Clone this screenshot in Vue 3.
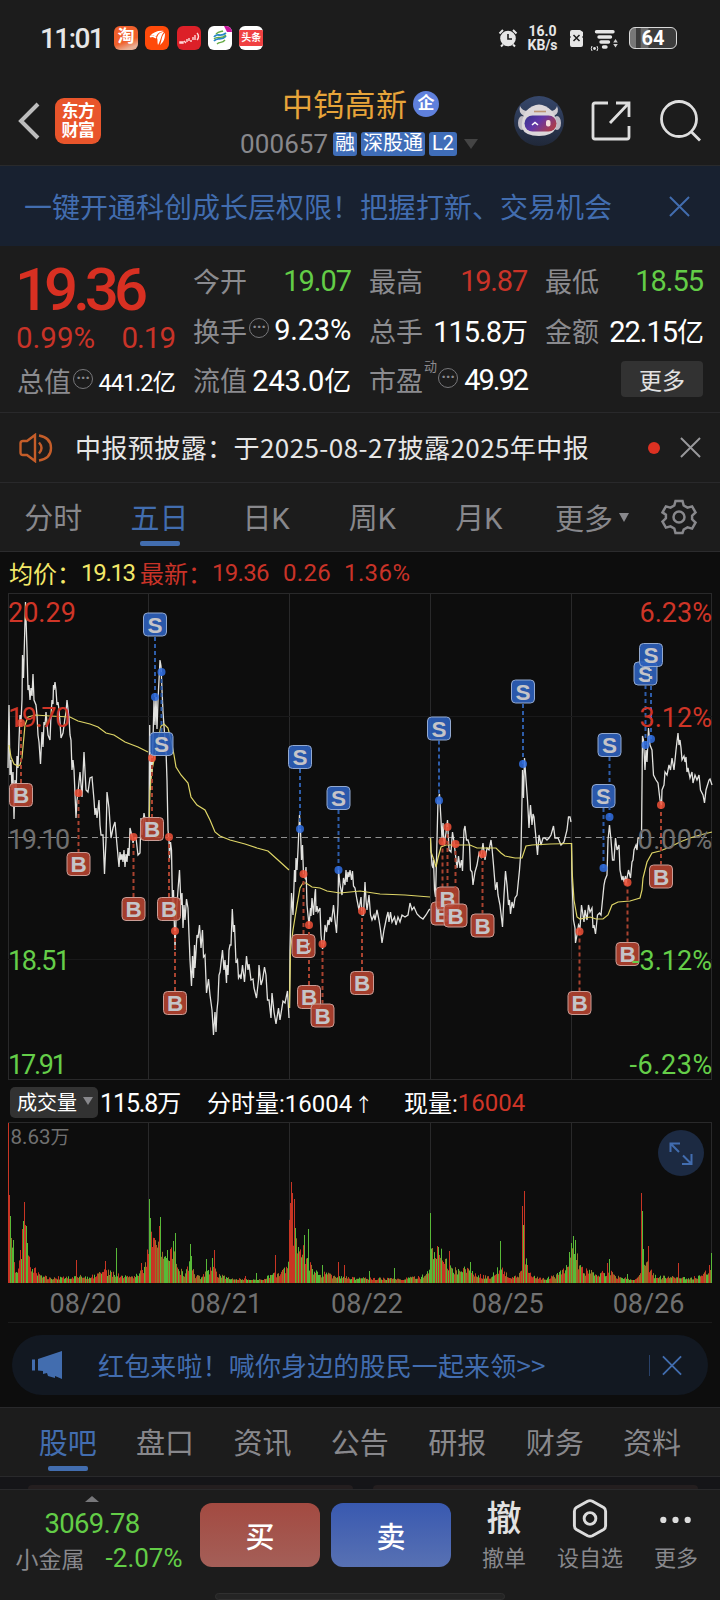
<template>
  <div class="phone">
    <div class="status">
      <span class="time">11:01</span>
      <div class="apps">
        <span class="app app-tao">淘</span>
        <svg class="app" viewBox="0 0 24 24">
          <rect width="24" height="24" fill="#ff4a0a" />
          <path d="M5 10C8 6 14 4 19 5C14 6 12 8 11 11C9 9 7 9 5 10ZM12 12C13 8 15 6 19 6C16 9 16 14 13 19C12 16 13 14 12 12ZM16 16C17 12 17 9 20 7C20 12 19 16 15 19Z" fill="#fff" />
          <path d="M5 11C7 9.500 9 10 11 12" stroke="#fff" stroke-width="1.500" fill="none" />
        </svg>
        <svg class="app" viewBox="0 0 24 24">
          <rect width="24" height="24" fill="#dc2028" />
          <path d="M3 16h3v1H3ZM7 15l2 2M10 13v3M12 12v3M14 14v2M16 11v3M18 9v5M20 7c2 2 2 5 0 7" stroke="#ffd9d9" stroke-width="1.400" fill="none" />
        </svg>
        <svg class="app" viewBox="0 0 24 24">
          <rect width="24" height="24" fill="#fff" />
          <path d="M16 0h8v6h-5z" fill="#c8149a" />
          <path d="M6 11c3-5 6 1 12-4M6 15c4-5 6 1 12-5" stroke="#2a87c8" stroke-width="1.800" fill="none" />
          <path d="M8 8c3-3 5-2 7-3M6 13c4-4 7 1 12-4M9 18c3-3 5 0 8-4" stroke="#66ab46" stroke-width="1.400" fill="none" />
        </svg>
        <span class="app app-tt"><i>头条</i></span>
      </div>
      <svg class="alarm" viewBox="0 0 20 20">
        <circle cx="10" cy="10.500" r="7.800" fill="#e6e6e6" />
        <path d="M1.500 5.500L5 2M18.500 5.500L15 2M5 16.500l-2 2M15 16.500l2 2" stroke="#e6e6e6" stroke-width="2" />
        <path d="M10 6v5h4" stroke="#1c1c1c" stroke-width="1.600" fill="none" />
      </svg>
      <div class="speed"><span>16.0</span><span>KB/s</span></div>
      <svg class="sim" viewBox="0 0 13 17">
        <path d="M2 0h8l3 2v4l-1 1 1 1v7q0 2-2 2H2q-2 0-2-2V8l1-1-1-1V2q0-2 2-2z" fill="#e6e6e6" />
        <path d="M3.500 5l6 6M9.500 5l-6 6" stroke="#1c1c1c" stroke-width="1.500" />
      </svg>
      <svg class="wifi" viewBox="0 0 28 24">
        <g stroke="#e6e6e6" stroke-width="3.400" stroke-linecap="round">
          <path d="M6.500 3.800H23M9 9h11.500M11 14h7.500M13.500 19h2.500" />
        </g>
        <path d="M2 18q-1.500 2.500 0 5M7 18q1.500 2.500 0 5" stroke="#e6e6e6" stroke-width="1" fill="none" />
        <circle cx="4.500" cy="20.500" r="1.400" fill="#e6e6e6" />
        <path d="M25.500 11l2.300 3.500h-4.600zM25.500 19.500l2.300-3.500h-4.600z" fill="#d0d0d0" />
      </svg>
      <div class="battery">64</div>
    </div>

    <header class="header">
      <svg class="back" viewBox="0 0 22 38"><path d="M20 2L3 19L20 36" /></svg>
      <div class="logo"><span>东方</span><span>财富</span></div>
      <div class="stock">
        <div class="stock-name">中钨高新<span class="corp">企</span></div>
        <div class="stock-code">
          <span class="code">000657</span>
          <span v-for="tag in tags" :key="tag" class="tag">{{ tag }}</span>
          <i class="caret"></i>
        </div>
      </div>
      <svg class="robot" viewBox="0 0 50 50">
        <defs>
          <linearGradient id="visor" x1="0" y1="0" x2="1" y2="0.500">
            <stop offset="0" stop-color="#34348c" />
            <stop offset="0.500" stop-color="#6336a8" />
            <stop offset="1" stop-color="#a83d50" />
          </linearGradient>
          <linearGradient id="night" x1="0" y1="0" x2="0" y2="1">
            <stop offset="0" stop-color="#36476b" />
            <stop offset="1" stop-color="#202839" />
          </linearGradient>
        </defs>
        <circle cx="25" cy="25" r="25" fill="url(#night)" />
        <path d="M6 10q-2 7 4 10l4-5q-6 0-8-5zM43 10q3 7-3 10l-4-5q6 0 7-5z" fill="#cfcbd0" />
        <ellipse cx="8" cy="27" rx="4" ry="7" fill="#bdb9c2" />
        <ellipse cx="43" cy="27" rx="4" ry="7" fill="#bdb9c2" />
        <path d="M12 15Q25 2 38 15Q44 24 42 32Q38 40 25 40Q11 40 8 32Q7 23 12 15Z" fill="#dcd7da" />
        <rect x="10.500" y="19.500" width="32" height="16" rx="8" fill="url(#visor)" />
        <path d="M18 29l3-2.500 3 2.500" stroke="#fff" stroke-width="1.600" fill="none" />
        <rect x="32" y="24" width="4.500" height="6.500" rx="2" fill="#f4dcdc" />
        <path d="M20 15.500h12" stroke="#bd9474" stroke-width="1.600" />
      </svg>
      <svg class="share" viewBox="0 0 40 40">
        <path d="M17 2H4Q2 2 2 4V36Q2 38 4 38H36Q38 38 38 36V25M25 2H38V16M37 3L19 22" />
      </svg>
      <svg class="search" viewBox="0 0 42 42"><circle cx="19" cy="19" r="17.500" /><path d="M31 31.500L40 40.500" /></svg>
    </header>

    <div class="notice">
      <span>一键开通科创成长层权限！把握打新、交易机会</span>
      <svg class="close" viewBox="0 0 22 22"><path d="M1 1l20 20M21 1L1 21" /></svg>
    </div>

    <section class="quote">
      <div class="main-quote">
        <div class="price">19.36</div>
        <div class="change"><span>0.99%</span><span>0.19</span></div>
        <div class="cell small">
          <span class="label">总值</span><i class="dots">···</i><b>441.2亿</b>
        </div>
      </div>
      <div class="cells">
        <div v-for="cell in cells" :key="cell.label" class="cell" :class="cell.tone">
          <span class="label">{{ cell.label }}</span><sup v-if="cell.sup">{{ cell.sup }}</sup><i v-if="cell.info" class="dots">···</i>
          <b>{{ cell.value }}<small v-if="cell.unit">{{ cell.unit }}</small></b>
        </div>
        <div class="cell end"><button class="more">更多</button></div>
      </div>
    </section>

    <div class="report">
      <svg class="speaker" viewBox="0 0 34 30">
        <path d="M8 8L16 2V28L8 22H4Q1.500 22 1.500 19.500V10.500Q1.500 8 4 8ZM20 9.500q5 5.500 0 11M20 2.500q12 2 12 12.500t-12 12.500" />
      </svg>
      <span class="report-text">中报预披露：于2025-08-27披露2025年中报</span>
      <i class="unread"></i>
      <svg class="close" viewBox="0 0 22 22"><path d="M1 1l20 20M21 1L1 21" /></svg>
    </div>

    <nav class="periods">
      <span v-for="p in periods" :key="p" class="tab" :class="{ active: p === '五日' }">{{ p }}</span>
      <span class="tab-more">更多<i></i></span>
      <svg class="gear" viewBox="0 0 36 36">
        <path d="M14.500 2h7l1.200 4.500 3.800 2.200 4.600-1.300 3.400 6-3.400 3.300v3.600l3.400 3.300-3.400 6-4.600-1.300-3.800 2.200L21.500 34h-7l-1.200-4.500-3.800-2.200-4.600 1.300-3.400-6 3.400-3.300v-3.600L1.500 13.400l3.400-6 4.600 1.300 3.800-2.200z" />
        <circle cx="18" cy="18" r="5.500" />
      </svg>
    </nav>

    <section class="chart-area">
      <div class="average">
        <span class="yellow">均价：</span><span class="yellow avg-price">19.13</span>
        <span>最新：</span><span class="last-price">19.36</span>
        <span class="last-diff">0.26</span><span>1.36%</span>
      </div>

      <svg class="price-chart" viewBox="0 593 720 487">
        <path class="frame" d="M8 593.500H712M8 1079.500H712M8.500 593V1080M711.500 593V1080" />
        <path class="frame" d="M148.500 593V1080M289.500 593V1080M430.500 593V1080M571.500 593V1080" />
        <path class="faint" d="M8 716.500H712M8 959.500H712" />
        <path class="zero" d="M8 837.500H712" />
        <polyline v-for="(d, i) in priceLines" :key="'p' + i" class="price-line" :points="d" />
        <polyline v-for="(d, i) in averageLines" :key="'a' + i" class="average-line" :points="d" />
        <g v-for="(m, i) in markers" :key="'m' + i" :class="m[0] === 'S' ? 'sell' : 'buy'">
          <line :x1="m[1]" :x2="m[1]" :y1="m[2]" :y2="m[3] + (m[3] > m[2] ? -12 : 12)" />
          <circle :cx="m[1]" :cy="m[2]" r="4" />
          <rect :x="m[1] - 11.500" :y="m[3] - 11.500" width="23" height="23" rx="4" />
          <text :x="m[1]" :y="m[3] + 8">{{ m[0] }}</text>
        </g>
        <g class="axis">
          <text class="up" x="8" y="622">20.29</text>
          <text class="up tight" x="8" y="726.500">19.70</text>
          <text class="flat tight" x="8" y="848.500">19.10</text>
          <text class="down tight" x="8" y="969.500">18.51</text>
          <text class="down tighter" x="8" y="1074">17.91</text>
        </g>
        <g class="axis right">
          <text class="up" x="712" y="622">6.23%</text>
          <text class="up" x="712" y="726.500">3.12%</text>
          <text class="flat wide" x="713" y="848.500">0.00%</text>
          <text class="down" x="712" y="969.500">-3.12%</text>
          <text class="down wide" x="713" y="1074">-6.23%</text>
        </g>
      </svg>

      <div class="volume-head">
        <span class="indicator">成交量<i></i></span>
        <span class="total">115.8<small>万</small></span>
        <span class="minute">分时量:16004<em>↑</em></span>
        <span class="current">现量:</span><span class="red">16004</span>
      </div>

      <div class="volume-box">
        <svg class="volume-chart" viewBox="0 1122 720 161">
          <path class="frame" d="M8 1122.500H712M711.500 1122V1283M148.500 1122V1283M289.500 1122V1283M430.500 1122V1283M571.500 1122V1283" />
          <path v-for="(d, color) in volumePaths" :key="color" :d="d" :stroke="color" fill="none" />
          <text class="volume-max" x="10.500" y="1144">8.63<tspan font-size="19">万</tspan></text>
        </svg>
        <svg class="expand" viewBox="0 0 46 46">
          <circle cx="23" cy="23" r="23" />
          <path d="M12.500 22V13.500H22M13 14l8 8M33.500 24V34H24M33 33.500L25 25.500" />
        </svg>
      </div>

      <div class="dates">
        <span v-for="d in dates" :key="d">{{ d }}</span>
      </div>

      <div class="promo">
        <svg class="horn" viewBox="0 0 31 28">
          <path d="M0 8.500h3v11H0zM6 8L30 0V28L23 25V27L16 25L15 22L11 23V20L6 19.500Z" />
        </svg>
        <span>红包来啦！喊你身边的股民一起来领&gt;&gt;</span>
        <svg class="close" viewBox="0 0 22 22"><path d="M1 1l20 20M21 1L1 21" /></svg>
      </div>
    </section>

    <nav class="sections">
      <span v-for="s in sections" :key="s" class="tab" :class="{ active: s === '股吧' }">{{ s }}</span>
    </nav>
    <div class="peek"><i></i><i></i></div>

    <footer class="footer">
      <div class="sector">
        <i class="up-caret"></i>
        <span class="sector-index">3069.78</span>
        <div class="sector-row"><span>小金属</span><b>-2.07%</b></div>
      </div>
      <button class="trade buy-button">买</button>
      <button class="trade sell-button">卖</button>
      <div class="action cancel"><strong>撤</strong><span>撤单</span></div>
      <div class="action watch">
        <svg viewBox="0 0 36 40"><path d="M15.500 2.300Q18 1 20.500 2.300L32 8.800Q34 10 34 12.500V27.500Q34 30 32 31.200L20.500 37.700Q18 39 15.500 37.700L4 31.200Q2 30 2 27.500V12.500Q2 10 4 8.800Z" /><circle cx="18" cy="20" r="6" /></svg>
        <span>设自选</span>
      </div>
      <div class="action other">
        <svg viewBox="0 0 36 40"><g class="solid"><circle cx="5" cy="21.500" r="3.200" /><circle cx="17.500" cy="21.500" r="3.200" /><circle cx="30" cy="21.500" r="3.200" /></g></svg>
        <span>更多</span>
      </div>
      <i class="home-bar"></i>
    </footer>
  </div>
</template>

<script setup>
const tags = ['融', '深股通', 'L2']
const periods = ['分时', '五日', '日K', '周K', '月K']
const dates = ['08/20', '08/21', '08/22', '08/25', '08/26']
const sections = ['股吧', '盘口', '资讯', '公告', '研报', '财务', '资料']

const cells = [
  { label: '今开', value: '19.07', tone: 'down' },
  { label: '最高', value: '19.87', tone: 'up' },
  { label: '最低', value: '18.55', tone: 'down' },
  { label: '换手', value: '9.23%', info: true, tone: 'percent' },
  { label: '总手', value: '115.8', unit: '万' },
  { label: '金额', value: '22.15', unit: '亿' },
  { label: '流值', value: '243.0', unit: '亿', tone: 'percent' },
  { label: '市盈', value: '49.92', sup: '动', info: true, tone: 'ratio' }
]

// one line per trading day
const priceLines = [
  '8,768 9,705 10,775 11,760 12,790 13,772 14,819 15,780 16,800 17,756 18,768 19,740 20,715 21,722 22,700 22.5,655 23.5,678 25.5,602 27,650 28,690 29,685 30,700 31,688 32,696 33,674 34,700 36,705 37,715 38,735 39,742 40.5,764 42,732 43,747 44,722 45,725 46,712 48,735 50,740 51,715 52,700 53,704 53.5,685 54,690 55,682 56,690 57,705 58,702 59,710 60,722 61,738 63,733 65,718 66,712 67,700 69,718 70,735 71,740 72,770 73,760 74,770 76,818 77,800 78,792 80,772 82,797 84,752 86,790 88,792 90,778 92,777 94,800 95,815 96,808 97,818 99,800 100,825 101,835 103,835 104.5,874 106,840 107,792 109,808 111,838 113,828 115,822 117,845 119,867 120,852 121,860 122,854 123,862 124,850 125,867 126,854 127,862 128,848 129,856 130,828 132,836 133,843 134,838 136,838 138,855 140,853 141,818 142,835 144,813 146,825 148,830',
  '149,833 149.7,725 150.3,790 151,755 152,775 153,740 154,700 155,725 156,697 157,729 158,700 159,680 160,660 161,666 162,690 163,712 165,740 166,750 167,780 168,830 169,840 169.5,860 170.5,842 171.5,850 172.5,905 173.500,890 175,950 176,920 178,890 179.5,870 181,905 182,893 183,928 184,905 185,920 186.5,899 188,908 189,935 190,960 191.5,986 192.5,956 193.5,978 194.5,945 195,968 197,935 198,938 199.5,925 201,948 202.5,930 203.5,957 205,955 206.5,993 208.5,979 210,995 212,1010 213.5,1035 215,1012 216,1032 217,1010 218,1000 219,975 220,972 222.5,950 224,970 225,960 226.5,983 227,965 228,975 229,950 230,945 231,945 232.3,909 233.5,932 234.5,925 236,963 237.5,960 238.5,978 240,975 241,979 242.5,965 244.5,982 246.5,956 248,970 249,964 251,980 253,979 254,988 256.5,998 258.5,980 259,965 261,985 262.5,980 264.5,967 266,975 267.5,1000 269,1000 271,1018 272,993 274,1012 276,1024 278.5,1008 280,1020 283,1001 285,1003 287.5,991 289,1018',
  '289.5,1008 290,950 291.5,893 293,915 294.5,870 295.5,882 296,858 297,870 298,850 299.5,815 300.5,830 301.5,860 302.5,845 303.5,875 305,878 306,867 307,905 309,925 310.5,908 311,916 312,898 313.5,915 315,893 315.5,889 316,912 317,906 318,912 320,908 321,935 322.5,949 324,943 325,925 326.5,932 328,920 329,925 330,917 331.5,922 333.5,905 335,920 336.5,933 338,905 338.5,870 340,885 342,895 343.5,878 345,885 346,870 347,882 348,872 349,877 350,870 351.5,880 352.5,871 353.5,886 355,888 357,900 359,910 361,897 362,915 363.5,915 365,882 366,900 367,910 369,895 370.5,915 372,920 374,915 375,920 377,910 379,920 380.5,930 382,943 384,930 386.5,918 388,912 389,922 390.5,912 392,922 394.5,917 396,925 398,917 400,922 402,915 405,917 408,915 410,903 412,910 414,907 417,914 420,917 423,919 426,915 429,910 430,909',
  '430.5,838 431,850 432,865 433,868 433.5,860 434.5,890 435.5,897 436.5,860 438,800 439.5,794 441,820 442,838 443,823 444,845 446,833 447.5,820 449,850 451,852 452.5,832 454,842 455.5,855 457,868 458.5,856 460,868 461.5,860 462.5,871 464,830 465,826 466.5,840 468,840 469.5,845 470.5,870 472,872 473,885 475,872 477,865 479,853 481,857 483,843 485,860 487,848 489,850 491,840 492,848 493.5,865 495.5,890 497,882 498,895 500,905 502.5,927 504,895 505.5,871 507,885 508.5,905 509.5,900 510.5,914 512,902 513.5,908 515,898 517,895 518,885 519.5,870 521,850 522,800 522.5,770 523.5,798 524.5,758 526,780 527.5,800 529,828 530,812 530.5,805 532,825 533,814 534,817 535.5,833 537.5,855 539,835 541,845 543,838 545,838 547,840 549,838 551,835 553.5,826 555,838 558,838 561,845 564,842 567,830 568.5,817 570,817 571,822',
  '571.5,843 572,880 573.5,920 575,928 575.5,943 577,935 578.5,925 580,928 581.5,905 583,915 584,922 585,910 587,920 588.5,905 590,912 592,908 593,928 594,925 595.5,934 597.5,915 599.5,913 601,915 603,895 604,885 605,880 607,875 608,840 609.5,825 611,840 612.5,860 614,860 615.5,838 617,850 619,845 620,870 622,880 623,876 624,882 625.5,876 626,885 627,878 628.5,870 630.5,878 632,862 633,860 634,850 636,845 637,850 638,838 640,838 641.5,838 642.5,736 643.5,740 645,770 646,750 647,762 648.5,728 650,745 652,750 653.5,775 656,780 658,783 660,800 661.500,806 662,790 664,785 665,772 667,775 669,765 670.5,770 672,758 674,770 676,750 678,733 679,745 680,740 681,748 682,760 684,756 685,762 686,757 687,772 688,768 690,778 692,772 693,783 695,775 697,780 699,775 700.5,790 703,795 704.5,803 706,790 709,780 710,779 712,785'
]

const averageLines = [
  '9,745 11,757 14,764 18,766 20,765 22,758 25,725 28,717 35,715 50,716 70,717 78,721 90,724 98,727 106,733 114,735 125,742 138,747 148,752',
  '149,830 150,790 152,770 155,755 158,740 161,726 164,724 168,728 171,740 174,755 176,767 181,775 188,783 191,797 197,805 205,810 210,820 215,832 220,836 230,840 245,844 257,848 268,851 278,860 289,870',
  '289.5,1008 290.5,950 293,930 297,905 300,888 303,883 306,883 312,887 320,888 327,891 340,893 360,891 380,894 405,895 430,897',
  '430.5,838 431,852 434,860 436,867 438,858 441,847 446,845 455,845 470,845 477,848 496,848 501,853 505,856 515,858 522,858 526,846 532,845 550,844 571,843.5',
  '571.5,843 572,870 574,900 577,917 580,919 585,918 590,917 596,919 603,919 608,915 612,905 618,902 630,901 640,898 642,890 643,878 647,862 652,853 660,851 670,847 680,842 690,838 700,835 712,832'
]

// side, x, y on the line, y of the badge
const markers = [
  ['B', 21, 723, 795], ['B', 78.5, 793, 864], ['B', 133.5, 837, 909],
  ['S', 155, 697, 624.5], ['B', 152, 758, 829], ['S', 161.5, 672, 744],
  ['B', 169, 837, 909], ['B', 175, 931, 1003],
  ['S', 300, 829, 757], ['B', 303.5, 874, 946], ['B', 309, 925, 997],
  ['B', 322.5, 944, 1015.5], ['S', 338.5, 870, 798], ['B', 362, 911, 983],
  ['S', 439, 800.5, 728.5], ['B', 442.5, 841.5, 913.5], ['B', 447.5, 827, 898.5],
  ['B', 455.5, 844, 915.5], ['B', 482.5, 854, 925.5], ['S', 523, 764, 691.5],
  ['B', 579.5, 931.5, 1003], ['S', 603.5, 868, 796], ['S', 609.5, 817, 745],
  ['B', 627.5, 882.5, 954], ['S', 645.5, 745, 673.5], ['S', 651, 739, 655], ['B', 661, 805, 876.5]
]

// typical bar height along x, plus the single bars that stand out
const envelope = [
  [8, 55], [12, 30], [15, 17], [18, 14], [20, 26], [22, 45], [24, 60], [26, 50], [28, 26], [32, 16], [37, 12], [42, 7], [50, 5],
  [75, 7], [90, 6], [105, 12], [118, 8], [130, 6], [142, 13], [146, 20], [149, 50], [155, 40], [160, 35], [163, 20], [168, 25],
  [174, 32], [178, 15], [184, 8], [190, 20], [195, 8], [200, 6], [212, 16], [218, 8], [228, 6], [238, 4], [262, 3], [270, 8],
  [280, 9], [286, 15], [288, 30], [290, 75], [294, 50], [300, 43], [304, 28], [312, 15], [318, 8], [325, 10], [335, 6], [360, 5],
  [400, 4], [420, 6], [428, 12], [431, 35], [440, 30], [446, 20], [452, 12], [465, 15], [475, 8], [490, 6], [498, 14], [503, 12],
  [510, 6], [518, 6], [521, 20], [525, 28], [528, 12], [535, 6], [545, 5], [555, 7], [562, 12], [568, 18], [572, 38], [575, 33],
  [578, 20], [585, 12], [600, 9], [608, 12], [620, 5], [635, 4], [640, 8], [643, 25], [650, 12], [656, 6], [670, 6], [685, 5],
  [695, 6], [704, 10], [712, 18]
]
const peaks = {
  8: [160, 'r'], 9: [88, 'r'], 10: [67, 'g'], 11: [45, 'm'], 13: [43, 'g'], 20: [33, 'r'], 22: [54, 'r'], 23: [62, 'g'],
  24: [81, 'r'], 25: [58, 'r'], 26: [57, 'g'], 27: [40, 'g'], 76: [23, 'r'], 105: [22, 'r'], 116: [35, 'g'], 141: [20, 'r'],
  149: [84, 'g'], 150: [65, 'g'], 152: [36, 'r'], 154: [45, 'r'], 156: [38, 'r'], 159: [57, 'r'], 160: [66, 'g'], 167: [33, 'g'],
  173: [42, 'g'], 175: [50, 'g'], 190: [39, 'g'], 191: [27, 'g'], 206: [24, 'g'], 212: [25, 'g'], 214: [33, 'r'], 245: [7, 'r'],
  256: [10, 'g'], 275: [28, 'r'], 290: [80, 'r'], 291: [101, 'r'], 292: [90, 'r'], 294: [84, 'r'], 295: [55, 'g'], 304: [48, 'g'],
  308: [54, 'g'], 322: [18, 'g'], 338: [21, 'r'], 344: [18, 'r'], 369: [12, 'g'], 394: [15, 'g'], 430: [70, 'g'], 432: [35, 'm'],
  437: [37, 'r'], 449: [32, 'r'], 470: [21, 'g'], 500: [42, 'g'], 522: [77, 'r'], 523: [58, 'g'], 524: [92, 'r'], 569: [31, 'g'],
  571: [40, 'g'], 573: [47, 'g'], 575: [43, 'g'], 607: [20, 'r'], 609: [24, 'g'], 627: [9, 'g'], 641: [90, 'r'], 642: [72, 'g'],
  643: [34, 'g'], 648: [37, 'r'], 678: [20, 'r'], 709: [18, 'r'], 711: [30, 'g']
}
const barColors = { r: '#c83524', g: '#58b938', m: '#967128' }

function heightAt(x) {
  const i = envelope.findIndex((p) => p[0] >= x)
  if (i <= 0) return envelope[0][1]
  const [x0, h0] = envelope[i - 1]
  const [x1, h1] = envelope[i]
  return h0 + ((h1 - h0) * (x - x0)) / (x1 - x0)
}

function buildVolume() {
  const paths = { [barColors.r]: '', [barColors.m]: '', [barColors.g]: '' }
  let seed = 17
  const random = () => (seed = (seed * 16807) % 2147483647) / 2147483647
  for (let x = 8; x < 712; x++) {
    const roll = random()
    let height = Math.max(3, heightAt(x) * (0.6 + random() * 0.65))
    let color = roll < 0.38 ? 'r' : roll < 0.68 ? 'g' : 'm'
    if (peaks[x]) [height, color] = peaks[x]
    paths[barColors[color]] += `M${x + 0.5} 1283v-${height.toFixed(1)}`
  }
  return paths
}

const volumePaths = buildVolume()
</script>

<style>
body {
  margin: 0;
  background: #1c1c1c;
}
</style>

<style scoped>
.phone {
  width: 720px;
  height: 1600px;
  overflow: hidden;
  background: #1c1c1c;
  color: #e6e6e6;
  font-family: Roboto, 'Noto Sans CJK SC', sans-serif;
  white-space: nowrap;
}

.phone * {
  box-sizing: border-box;
}

i, em {
  font-style: normal;
}

b {
  font-weight: 400;
}

svg {
  display: block;
  flex-shrink: 0;
}

button {
  border: 0;
  padding: 0;
  font-family: inherit;
}

.status {
  display: flex;
  align-items: center;
  height: 76px;
  padding-left: 40px;
}

.time {
  width: 74px;
  font-size: 28px;
  font-weight: 500;
  letter-spacing: -1.6px;
}

.apps {
  display: flex;
  gap: 7.3px;
  width: 384px;
}

.app {
  width: 24px;
  height: 24px;
  border-radius: 6px;
  overflow: hidden;
}

.app-tao {
  background: linear-gradient(160deg, #f0602c 60%, #e9b096 85%);
  color: #fff;
  font-size: 17px;
  font-weight: 700;
  line-height: 20px;
  text-align: center;
}

.app-tt {
  background: #fff;
  color: #fff;
  padding-top: 4px;
}

.app-tt i {
  display: block;
  height: 16px;
  background: #f04142;
  font-size: 10px;
  font-weight: 700;
  line-height: 15px;
  text-align: center;
}

.alarm {
  width: 20px;
  height: 20px;
}

.speed {
  display: flex;
  flex-direction: column;
  align-items: center;
  width: 29px;
  margin-left: 10px;
  font-size: 14px;
  font-weight: 700;
  line-height: 14.5px;
  letter-spacing: -0.1px;
}

.sim {
  width: 13px;
  height: 17px;
  margin-left: 13px;
}

.wifi {
  width: 28px;
  height: 24px;
  margin: 4px 0 0 7px;
}

.battery {
  width: 48px;
  height: 22px;
  margin-left: 11px;
  border: 1.500px solid #d9d9d9;
  border-radius: 6px;
  background: linear-gradient(90deg, #777 0 12%, #3b3b3b 13% 22%, #686868 25% 38%, #3c3c3c 42%);
  color: #fff;
  font-size: 20px;
  font-weight: 700;
  line-height: 20px;
  text-align: center;
}

.header {
  display: flex;
  align-items: center;
  height: 90px;
  padding-left: 18px;
  border-bottom: 1px solid #292a2c;
}

.back {
  width: 22px;
  height: 38px;
}

.back path {
  fill: none;
  stroke: #bdbdbd;
  stroke-width: 4;
}

.logo {
  display: flex;
  flex-direction: column;
  align-items: center;
  justify-content: center;
  width: 46px;
  height: 46px;
  margin-left: 15px;
  border-radius: 9px;
  background: #e9552b;
  color: #fff;
  font-size: 17px;
  font-weight: 700;
  line-height: 19px;
  letter-spacing: -0.5px;
}

.stock {
  width: 240px;
  margin: 3px 0 0 139px;
}

.stock-name {
  display: flex;
  align-items: center;
  height: 40px;
  padding-left: 42px;
  color: #e7a43a;
  font-size: 31px;
  letter-spacing: 0.3px;
}

.corp {
  width: 26px;
  height: 26px;
  margin: 2px 0 0 6px;
  border-radius: 50%;
  background: #5f80dc;
  color: #fff;
  font-size: 17px;
  font-weight: 700;
  line-height: 25px;
  text-align: center;
}

.stock-code {
  display: flex;
  align-items: center;
  gap: 4px;
  height: 39px;
  padding-top: 4px;
}

.code {
  width: 89px;
  color: #88888c;
  font-size: 26px;
  letter-spacing: 0.1px;
}

.tag {
  height: 24px;
  padding: 0 2px;
  border-radius: 3px;
  background: #3f6db8;
  color: #fff;
  font-size: 20px;
  line-height: 23px;
}

.tag:last-of-type {
  padding: 0 3px;
}

.caret {
  margin-left: 3px;
  border: 7px solid transparent;
  border-top: 10px solid #444;
  border-bottom: 0;
}

.robot {
  width: 50px;
  height: 50px;
  margin-left: 34px;
}

.share {
  width: 40px;
  height: 40px;
  margin-left: 27px;
}

.search {
  width: 42px;
  height: 42px;
  margin-left: 29px;
}

.share path,
.search circle,
.search path {
  fill: none;
  stroke: #dedede;
  stroke-width: 2.800;
}

.notice {
  display: flex;
  align-items: center;
  justify-content: space-between;
  height: 80px;
  padding: 0 30px 0 24px;
  background: #182130;
  color: #426daf;
  font-size: 28px;
}

.close {
  width: 21px;
  height: 21px;
  fill: none;
  stroke: currentColor;
  stroke-width: 2;
}

.quote {
  display: flex;
  gap: 18px;
  height: 167px;
  padding: 10px 16px 6px 17px;
  border-bottom: 1px solid #29292b;
}

.main-quote {
  width: 158px;
}

.price {
  height: 67px;
  margin-left: -2px;
  color: #d83022;
  font-size: 60px;
  font-weight: 500;
  line-height: 67px;
  letter-spacing: -5px;
}

.change {
  display: flex;
  justify-content: space-between;
  height: 33px;
  margin-left: -1px;
  color: #c93328;
  font-size: 29.500px;
  line-height: 31px;
}

.change span:last-child {
  letter-spacing: -1px;
}

.cells {
  display: grid;
  grid-template-columns: repeat(3, 158px);
  grid-auto-rows: 49.500px;
  column-gap: 18px;
}

.cell {
  display: flex;
  align-items: center;
  height: 49.500px;
  color: #fff;
}

.cell b {
  margin-left: auto;
  font-size: 29px;
  letter-spacing: -1px;
}

.cell small {
  font-size: 27px;
}

.cell.up b {
  color: #c93328;
  letter-spacing: -1.2px;
}

.cell.down b {
  color: #63cd47;
}

.cell.percent b {
  letter-spacing: -0.2px;
}

.cell.ratio b {
  letter-spacing: -2px;
}

.cell .label {
  color: #8b8b8f;
  font-size: 27px;
}

.cell sup {
  align-self: flex-start;
  margin: 5px -1px 0 1px;
  color: #8b8b8f;
  font-size: 13px;
  line-height: 14px;
}

.cell .dots {
  width: 20px;
  height: 20px;
  margin: -4px 0 0 2px;
  border: 1.500px solid #77777a;
  border-radius: 50%;
  color: #8b8b8f;
  font-size: 16px;
  font-weight: 700;
  line-height: 16px;
  text-align: center;
  letter-spacing: -0.3px;
}

.cell.small b {
  font-size: 23.500px;
}

.cell.end {
  justify-content: flex-end;
}

.more {
  width: 82px;
  height: 36px;
  margin-bottom: 2px;
  border-radius: 4px;
  background: #323232;
  color: #e2e2e2;
  font-size: 23px;
}

.report {
  display: flex;
  align-items: center;
  height: 70px;
  padding: 0 19px;
  border-bottom: 1px solid #29292b;
}

.speaker {
  width: 34px;
  height: 30px;
  fill: none;
  stroke: #c45d29;
  stroke-width: 2.400;
}

.report-text {
  width: 575px;
  padding: 0 0 2px 22px;
  font-family: 'Noto Sans CJK SC', sans-serif;
  font-size: 26px;
  letter-spacing: 0.42px;
}

.unread {
  width: 12px;
  height: 12px;
  margin-left: 20px;
  border-radius: 50%;
  background: #dc3122;
}

.report .close {
  margin-left: 20px;
  color: #99999c;
}

.periods {
  display: flex;
  align-items: center;
  height: 69px;
  border-bottom: 1px solid #2b2b2d;
}

.tab {
  display: flex;
  flex-direction: column;
  align-items: center;
  width: 106.400px;
  height: 68px;
  padding-top: 5px;
  color: #88888c;
  font-size: 29px;
  line-height: 62px;
}

.active {
  color: #426daf;
}

.active::after {
  content: '';
  width: 40px;
  height: 5px;
  margin-top: -9px;
  border-radius: 2px;
  background: #426daf;
}

.tab-more {
  display: flex;
  align-items: center;
  gap: 6px;
  width: 106px;
  margin-left: 23px;
  color: #88888c;
  font-size: 29px;
}

.tab-more i {
  border: 5px solid transparent;
  border-top: 9px solid #88888c;
  border-bottom: 0;
}

.gear {
  width: 36px;
  height: 36px;
  fill: none;
  stroke: #88888c;
  stroke-width: 2.500;
}

.chart-area {
  height: 855px;
  background: #0d0d0d;
}

.average {
  display: flex;
  align-items: center;
  height: 41px;
  padding-left: 9px;
  color: #c93328;
  font-size: 24px;
}

.yellow {
  color: #f3e869;
}

.avg-price {
  width: 59px;
  letter-spacing: -1.300px;
}

.last-price {
  width: 71px;
  letter-spacing: -0.700px;
}

.last-diff {
  width: 61px;
  letter-spacing: 0.300px;
}

.average span:last-child {
  letter-spacing: 0.400px;
}

.price-chart {
  width: 720px;
  height: 487px;
}

.frame {
  fill: none;
  stroke: #29292a;
}

.faint {
  stroke: #19191a;
}

.zero {
  stroke: #909090;
  stroke-dasharray: 6 4.500;
}

.price-line {
  fill: none;
  stroke: #e2e2df;
  stroke-width: 1.300;
}

.average-line {
  fill: none;
  stroke: #ded567;
  stroke-width: 1.200;
}

.sell line,
.buy line {
  stroke-width: 2;
  stroke-dasharray: 4 3;
}

.sell line {
  stroke: #2e5da9;
}

.buy line {
  stroke: #a94330;
}

.sell circle {
  fill: #316fe0;
  fill-opacity: 0.85;
}

.buy circle {
  fill: #ef5138;
  fill-opacity: 0.85;
}

.sell rect,
.buy rect {
  fill-opacity: 0.9;
}

.sell rect {
  fill: #2e60bc;
  stroke: #93a9cf;
}

.buy rect {
  fill: #b44230;
  stroke: #c99d96;
}

.sell text,
.buy text {
  fill: #c5c4c8;
  font-family: 'Liberation Sans', sans-serif;
  font-size: 22.500px;
  font-weight: 700;
  text-anchor: middle;
}

.axis {
  font-size: 27px;
}

.right {
  text-anchor: end;
}

.tight {
  letter-spacing: -1.400px;
}

.tighter {
  letter-spacing: -2.200px;
}

.wide {
  letter-spacing: 0.600px;
}

.axis .up {
  fill: #cf3527;
}

.axis .down {
  fill: #65ce49;
}

.axis .flat {
  fill: #707070;
}

.volume-head {
  display: flex;
  align-items: center;
  height: 42px;
  padding-left: 10px;
  color: #fff;
  font-size: 25px;
}

.indicator {
  display: flex;
  align-items: center;
  gap: 6px;
  width: 88px;
  height: 31px;
  margin: 2px 2px 0 0;
  padding: 0 0 2px 7px;
  border-radius: 5px;
  background: #323232;
  font-size: 20px;
}

.indicator i {
  border: 5px solid transparent;
  border-top: 8px solid #88888c;
  border-bottom: 0;
}

.total {
  width: 107px;
  letter-spacing: -1.100px;
}

.total small {
  font-size: 24px;
}

.minute {
  width: 197px;
  font-size: 24px;
}

.minute em {
  margin-left: 2px;
  font-family: 'Noto Sans CJK SC', sans-serif;
  font-size: 19px;
}

.current {
  font-size: 24px;
}

.red {
  padding-top: 3px;
  color: #cf3527;
  font-size: 24px;
}

.volume-box {
  position: relative;
  height: 161px;
}

.volume-chart {
  width: 720px;
  height: 161px;
}

.volume-max {
  fill: #707070;
  font-size: 20.500px;
}

.expand {
  position: absolute;
  top: 8px;
  right: 16px;
  width: 46px;
  height: 46px;
}

.expand circle {
  fill: #1c2a42;
}

.expand path {
  fill: none;
  stroke: #426daf;
  stroke-width: 2;
}

.dates {
  display: flex;
  height: 40px;
  margin: 0 8px 12px;
  padding-left: 7px;
  border-bottom: 1px solid #1c1c1c;
  color: #707070;
  font-size: 27px;
  line-height: 43px;
}

.dates span {
  flex: 0 0 140.800px;
  text-align: center;
}

.promo {
  display: flex;
  align-items: center;
  height: 60px;
  margin: 0 12px;
  padding: 0 14px 0 20px;
  border-radius: 30px;
  background: #121821;
  color: #426daf;
  font-family: 'Noto Sans CJK SC', sans-serif;
  font-size: 26px;
}

.horn {
  width: 31px;
  height: 28px;
  fill: #426daf;
}

.promo span {
  width: 586px;
  padding: 0 0 1px 35px;
  letter-spacing: 0.150px;
}

.promo .close {
  width: 33px;
  padding-left: 12px;
  margin-right: 12px;
  border-left: 1px solid #294169;
}

.sections {
  display: flex;
  height: 70px;
  padding-left: 19px;
  border-top: 1px solid #29292b;
  border-bottom: 1px solid #29292b;
}

.sections .tab {
  width: 97.400px;
}

.peek {
  display: flex;
  gap: 20px;
  height: 12px;
  padding: 8px 22px 0 28px;
  background: #151518;
}

.peek i {
  flex: 1;
  border-radius: 12px 12px 0 0;
  background: #241e1f;
}

.footer {
  position: relative;
  display: flex;
  height: 112px;
  border-top: 1px solid #29292b;
}

.sector {
  display: flex;
  flex-direction: column;
  align-items: center;
  width: 184px;
  padding-top: 6px;
}

.up-caret {
  border: 7px solid transparent;
  border-bottom: 6px solid #77777a;
  border-top: 0;
}

.sector-index {
  color: #63cd47;
  font-size: 27.500px;
  line-height: 43px;
  letter-spacing: -0.7px;
}

.sector-row {
  display: flex;
  align-items: center;
  justify-content: space-between;
  width: 167px;
  height: 26px;
  margin-left: 14px;
  color: #88888c;
  font-size: 23px;
}

.sector-row b {
  color: #63cd47;
  font-size: 26px;
}

.trade {
  width: 120px;
  height: 64px;
  margin: 13px 0 0 16px;
  padding-bottom: 1px;
  border-radius: 12px;
  color: #fff;
  font-size: 29px;
  font-weight: 500;
}

.buy-button {
  background: linear-gradient(#a34a41, #a45f58);
}

.sell-button {
  margin-left: 11px;
  background: linear-gradient(#3959b0, #5871b3);
}

.action {
  display: flex;
  flex-direction: column;
  align-items: center;
  width: 68px;
  padding-top: 9px;
  color: #88888c;
  font-size: 22px;
  line-height: 38px;
}

.action strong {
  height: 41px;
  color: #e2e2e2;
  font-size: 35px;
  font-weight: 500;
  line-height: 41px;
}

.action svg {
  width: 36px;
  height: 39px;
  margin-bottom: 2px;
  fill: none;
  stroke: #dcdcdc;
  stroke-width: 3;
}

.action .solid {
  fill: #dcdcdc;
  stroke: none;
}

.cancel {
  margin-left: 19px;
}

.watch {
  margin-left: 18px;
}

.other {
  margin-left: 18px;
}

.home-bar {
  position: absolute;
  left: 215px;
  bottom: 1px;
  width: 290px;
  height: 7px;
  border: 1px solid #303030;
  border-radius: 4px;
  background: #242424;
}
</style>
